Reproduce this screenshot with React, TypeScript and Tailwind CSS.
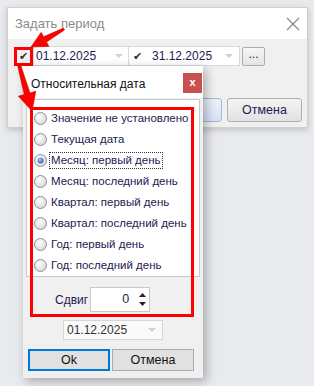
import React from "react";

const items = [
  "Значение не установлено",
  "Текущая дата",
  "Месяц: первый день",
  "Месяц: последний день",
  "Квартал: первый день",
  "Квартал: последний день",
  "Год: первый день",
  "Год: последний день",
];

function Radio({ checked }: { checked: boolean }) {
  return (
    <svg width="13" height="13" viewBox="0 0 13 13" className="shrink-0">
      <defs>
        <radialGradient id={checked ? "rg1" : "rg0"} cx="40%" cy="35%" r="70%">
          <stop offset="0%" stopColor="#ffffff" />
          <stop offset="100%" stopColor="#d6d6d6" />
        </radialGradient>
        <radialGradient id="dot" cx="40%" cy="35%" r="70%">
          <stop offset="0%" stopColor="#a8c4f0" />
          <stop offset="100%" stopColor="#2a5cc0" />
        </radialGradient>
      </defs>
      <circle cx="6.5" cy="6.5" r="6" fill={`url(#${checked ? "rg1" : "rg0"})`} stroke="#8e8f8f" strokeWidth="1" />
      {checked && <circle cx="6.5" cy="6.5" r="3" fill="url(#dot)" />}
    </svg>
  );
}

function Caret({ color = "#b8b8b8" }: { color?: string }) {
  return (
    <svg width="8" height="5" viewBox="0 0 8 5">
      <path d="M0 0 L8 0 L4 4 Z" fill={color} />
    </svg>
  );
}

export default function App() {
  const font = { fontFamily: '"Liberation Sans", Arial, sans-serif' };
  return (
    <div className="relative w-[314px] h-[386px] bg-[#e9eaee] overflow-hidden whitespace-nowrap" style={font}>
      {/* Main dialog */}
      <div className="ml-[7px] mt-[7px] w-[301px] h-[121px] bg-[#f0f0f0] border border-[#cfcfcf] shadow-[0_2px_6px_rgba(0,0,0,0.18)] flex flex-col">
        <div className="h-[31px] bg-white flex items-center justify-between pl-[7px] pr-[7px]">
          <span className="text-[13px] text-[#8a8a8a]">Задать период</span>
          <svg width="14" height="14" viewBox="0 0 14 14">
            <path d="M1 1 L13 13 M13 1 L1 13" stroke="#8a8a8a" strokeWidth="1.2" />
          </svg>
        </div>
        <div className="flex items-center pl-[6px] pt-[7px]">
          <div className="w-[19px] h-[19px] border-[3px] border-[#ff0000] flex items-center justify-center text-[11px] text-[#333]">
            ✔
          </div>
          <div className="w-[96px] h-[20px] bg-white border border-[#d9d9d9] flex items-center justify-between pl-[2px] pr-[5px] text-[12px] text-[#1e2050]">
            <span>01.12.2025</span>
            <Caret color="#d0d0d0" />
          </div>
          <div className="w-[111px] h-[20px] bg-white border border-[#d9d9d9] border-l-0 flex items-center justify-between pl-[4px] pr-[6px] text-[12px] text-[#1e2050]">
            <span className="flex items-center gap-[10px]">
              <span className="text-[11px] text-[#333]">✔</span>
              <span>31.12.2025</span>
            </span>
            <Caret color="#d0d0d0" />
          </div>
          <div className="ml-[2px] w-[23px] h-[19px] border border-[#adadad] rounded-[2px] bg-gradient-to-b from-[#f6f6f6] to-[#e4e4e4] flex items-center justify-center text-[12px] text-[#1e2050] leading-none pb-[4px]">
            ...
          </div>
        </div>
        <div className="flex justify-end gap-[5px] pr-[5px] mt-[32px]">
          <div className="w-[120px] h-[24px] rounded-[3px] border border-[#a8b6cc] bg-gradient-to-b from-[#eef3fb] to-[#d6e1f6]" />
          <div className="w-[75px] h-[24px] rounded-[3px] border border-[#b0b0b0] bg-gradient-to-b from-[#f4f4f4] to-[#e2e2e2] flex items-center justify-center text-[12.5px] text-[#1e2050]">
            Отмена
          </div>
        </div>
      </div>

      {/* Popup */}
      <div className="absolute left-[23px] top-[66px] w-[180px] h-[312px] bg-[#f0f0f0] shadow-[3px_3px_10px_rgba(0,0,0,0.3)] flex flex-col">
        <div className="h-[32px] bg-white flex items-start justify-between pl-[8px] pr-[1px]">
          <span className="text-[12px] text-[#111] mt-[9px]">Относительная дата</span>
          <div className="mt-[7px] w-[19px] h-[20px] bg-[#c75050] flex items-center justify-center text-white text-[11px] font-bold leading-none pb-[2px]">
            x
          </div>
        </div>
        <div className="mx-[3px] mt-[1px] h-[178px] bg-white border border-[#c8c8c8] flex flex-col pt-[8px] pl-[7px]">
          {items.map((t, i) => (
            <div key={t} className="h-[21px] flex items-center gap-[3px]">
              <Radio checked={i === 2} />
              <span
                className={
                  "text-[11.5px] text-[#1e2050] leading-[15px] px-[1px] " +
                  (i === 2 ? "outline outline-1 outline-dotted outline-[#333]" : "")
                }
              >
                {t}
              </span>
            </div>
          ))}
        </div>
        <div className="flex items-center mt-[10px] pl-[32px]">
          <span className="text-[12px] text-[#1e2050] mr-[2px]">Сдвиг</span>
          <div className="w-[60px] h-[25px] bg-white border border-[#c8c8c8] flex items-center justify-end pr-[3px]">
            <span className="text-[12.5px] text-[#1e2050] mr-[10px]">0</span>
            <div className="flex flex-col gap-[5px]">
              <svg width="7" height="4" viewBox="0 0 7 4"><path d="M0 4 L7 4 L3.5 0 Z" fill="#222" /></svg>
              <svg width="7" height="4" viewBox="0 0 7 4"><path d="M0 0 L7 0 L3.5 4 Z" fill="#222" /></svg>
            </div>
          </div>
        </div>
        <div className="ml-[40px] mt-[8px] w-[100px] h-[20px] bg-[#fafafa] border border-[#d6d6d6] flex items-center justify-between pl-[3px] pr-[6px] text-[12px] text-[#333]">
          <span>01.12.2025</span>
          <Caret color="#d0d0d0" />
        </div>
        <div className="flex gap-[2px] ml-[5px] mt-[9px]">
          <div className="w-[82px] h-[22px] border-2 border-[#0078d7] bg-[#e1e1e1] flex items-center justify-center text-[12.5px] text-[#111]">
            Ok
          </div>
          <div className="w-[82px] h-[22px] border border-[#adadad] bg-[#e1e1e1] flex items-center justify-center text-[12.5px] text-[#111]">
            Отмена
          </div>
        </div>
      </div>

      {/* Red highlight around list */}
      <div className="absolute left-[30px] top-[107px] w-[164px] h-[210px] border-[3px] border-[#ff0000] pointer-events-none" />

      {/* Arrows */}
      <svg className="absolute left-0 top-0 pointer-events-none" width="314" height="386" viewBox="0 0 314 386">
        <polygon
          points="63.5,28.1 64.5,29.9 46.5,42 48.9,46.4 31,47 41.2,32.3 43.6,36.7"
          fill="#ff0000"
          stroke="#d00000"
          strokeWidth="0.6"
          strokeLinejoin="round"
        />
        <polygon
          points="17.6,65.4 20.4,64.6 30,92.9 35.8,91.25 32,111 18.4,96.15 24.2,94.5"
          fill="#ff0000"
          stroke="#d00000"
          strokeWidth="0.6"
          strokeLinejoin="round"
        />
      </svg>
    </div>
  );
}
